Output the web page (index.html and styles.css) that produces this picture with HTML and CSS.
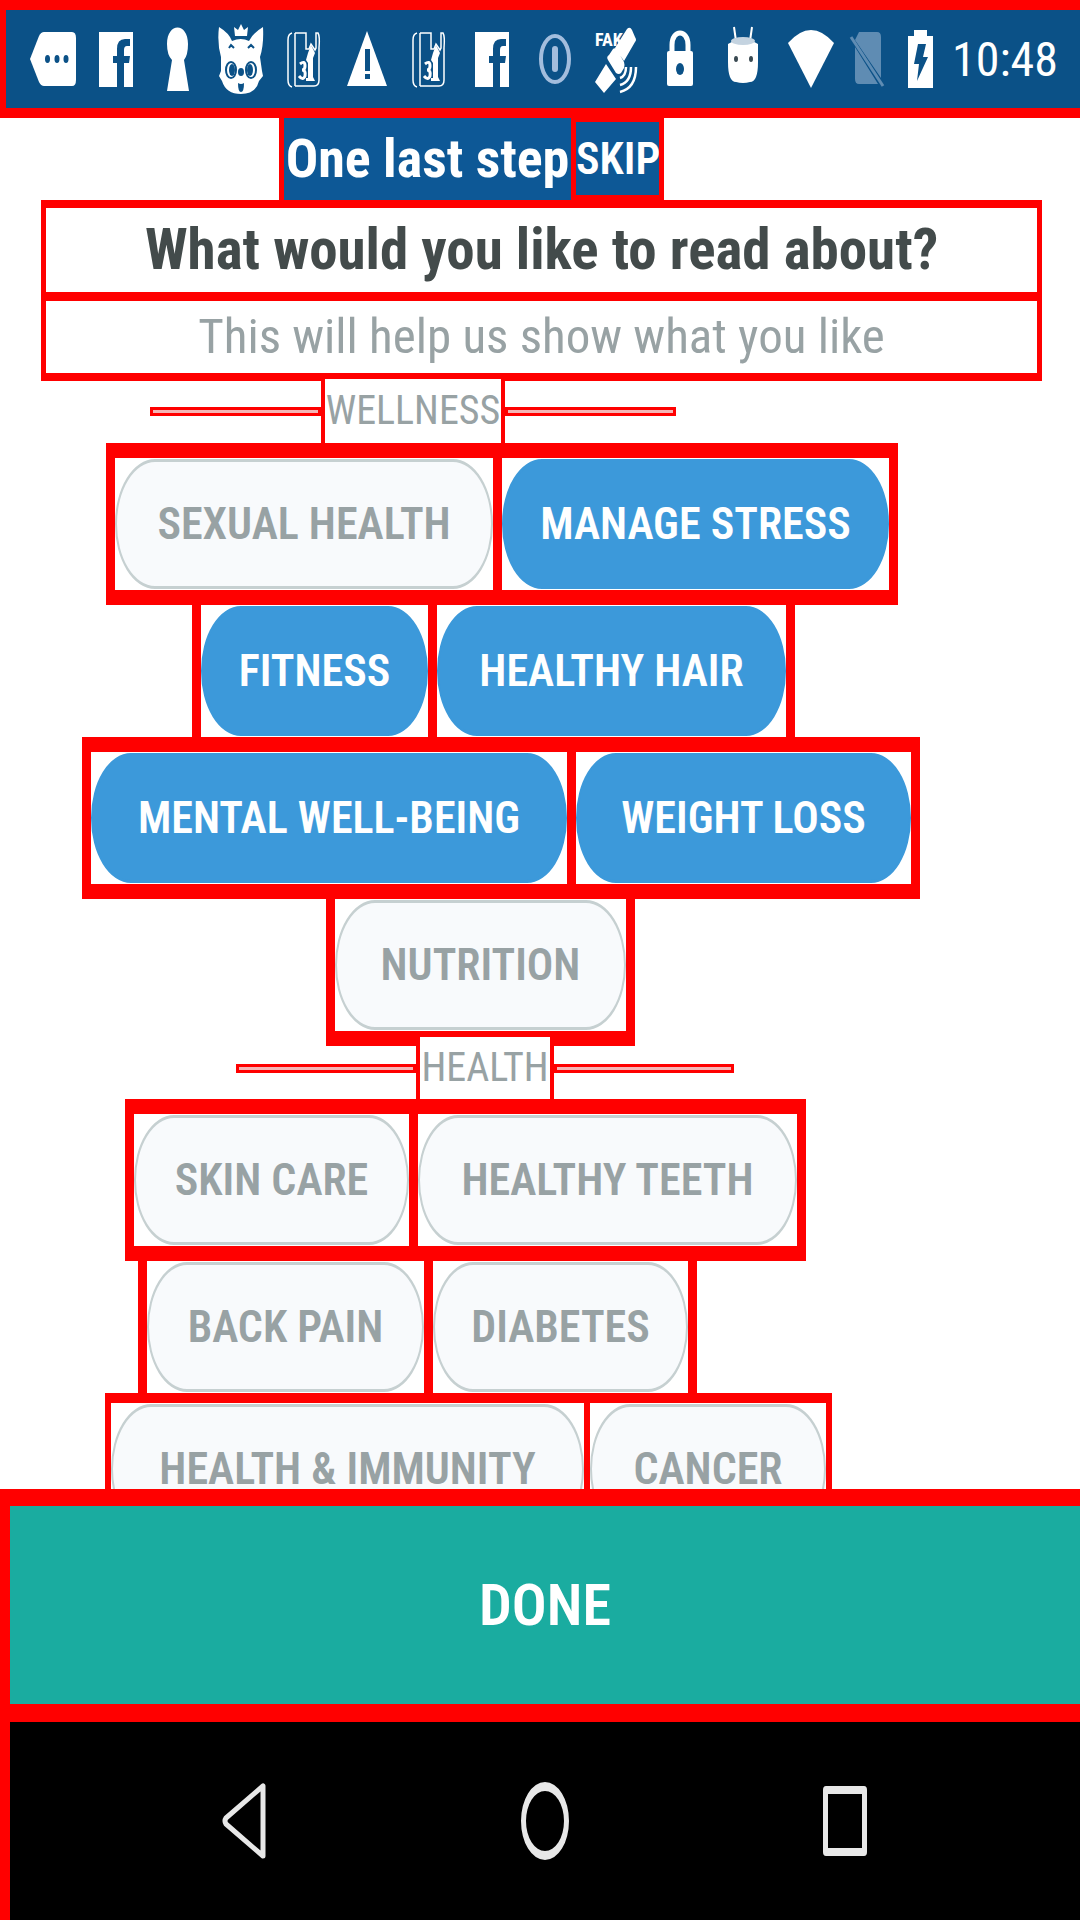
FILE: index.html
```html
<!DOCTYPE html>
<html lang="en">
<head>
<meta charset="utf-8">
<meta name="viewport" content="width=device-width, initial-scale=1">
<title>One last step</title>
<link rel="stylesheet" href="styles.css">
</head>
<body>
<svg class="defs" aria-hidden="true">
  <symbol id="facebook" viewBox="0 0 62 98">
    <path fill="currentColor" d="M14 22H48V77H39V53H44L45 46H39V40Q39 36 42 36H45V29H40Q32 29 32 39V46H28V53H32V77H14Z"/>
  </symbol>
  <symbol id="card" viewBox="0 0 62 98">
    <path fill="none" stroke="currentColor" stroke-width="1.5" d="M19 23Q15 24 15 30V70Q15 76 19 77M22 23V76M22 23H33V39H36L38 34L42 40L43 38V23H45Q47 26 46 38V70Q46 76 41 76H22"/>
    <path fill="currentColor" d="M35 43L38 35L42 43L40 48V67L42 71H33V68H35V53L33 50Z"/>
    <path fill="none" stroke="currentColor" stroke-width="3" d="M27 54Q32 50 32 56Q32 60 29 60Q33 60 32 66Q30 71 26 66"/>
  </symbol>
</svg>

<header class="status">
  <div class="notices">
    <svg class="icon" viewBox="0 0 62 98"><path fill="currentColor" d="M8 49L17 26Q19 22 22 22H50Q54 22 54 28V70Q54 76 50 76H22Q19 76 17 72Z"/><g fill="#0b5187"><ellipse cx="25.500" cy="49" rx="2.500" ry="4"/><ellipse cx="35" cy="49" rx="2.500" ry="4"/><ellipse cx="44" cy="49" rx="2.500" ry="4"/></g></svg>
    <svg class="icon"><use href="#facebook"/></svg>
    <svg class="icon" viewBox="0 0 62 98"><path fill="currentColor" d="M25 50Q20 45 20 34C20 12 41 12 41 34Q41 45 37 50L42 81H20Z"/></svg>
    <svg class="icon" viewBox="0 0 62 98"><path fill="currentColor" d="M24 17L28 20L31 14L34 20L38 17L37 26H25ZM9 17Q19 23 22 31Q31 27 39 31Q43 23 53 17Q54 35 50 47L52 61L53 66L49 71Q46 84 31 84Q16 84 12 71L9 66L11 61L11 47Q7 33 9 17Z"/><g fill="none" stroke="#0b5187"><path stroke-width="2" d="M19 38L21 35L24 38M38 38L41 35L44 38"/><ellipse cx="21" cy="60" rx="5" ry="8" stroke-width="2"/><ellipse cx="41" cy="60" rx="5" ry="8" stroke-width="2"/></g><g fill="#0b5187"><ellipse cx="22" cy="60" rx="3" ry="6"/><ellipse cx="40" cy="60" rx="3" ry="6"/><ellipse cx="31" cy="62" rx="3" ry="4"/><path d="M28 73Q31 75 34 73Q34 82 31 82Q28 82 28 73Z"/></g></svg>
    <svg class="icon"><use href="#card"/></svg>
    <svg class="icon" viewBox="0 0 62 98"><path fill="currentColor" d="M31 21L51 76H11Z"/><path fill="#0b5187" d="M29 39H34V61H29ZM29 64H34V69H29Z"/></svg>
    <svg class="icon"><use href="#card"/></svg>
    <svg class="icon"><use href="#facebook"/></svg>
    <svg class="icon icon-dim" viewBox="0 0 62 98"><ellipse cx="31" cy="49" rx="14" ry="23" fill="none" stroke="currentColor" stroke-width="4"/><path stroke="currentColor" stroke-width="6" stroke-linecap="round" d="M31 39V59"/></svg>
    <svg class="icon" viewBox="0 0 62 98"><text class="fake" x="9" y="36">FAK</text><g fill="currentColor"><path d="M41 19Q44 16 46 20L49 27Q51 30 49 32L38 51L29 38ZM20 54L30 69L18 83L9 72ZM22 50Q20 47 23 45L27 39Q29 37 31 40L38 52Q39 55 38 58L35 63Q33 65 30 63Z"/></g><path fill="none" stroke="currentColor" stroke-width="2.500" d="M34 68Q40 66 40 57M34 75Q45 72 45 57M34 82Q50 78 50 57"/></svg>
    <svg class="icon" viewBox="0 0 62 98"><path fill="none" stroke="currentColor" stroke-width="5" d="M23 42V35C23 19 39 19 39 35V42"/><rect x="18" y="41" width="26" height="35" rx="2" fill="currentColor"/><ellipse cx="31" cy="59" rx="4" ry="6" fill="#0b5187"/></svg>
    <svg class="icon" viewBox="0 0 62 98"><path stroke="currentColor" stroke-width="2" d="M22 17L24 31M40 17L38 31"/><path fill="currentColor" d="M16 34Q31 25 46 34V52Q46 72 38 72Q31 74 24 72Q16 72 16 52Z"/><ellipse cx="31" cy="31" rx="12" ry="4" fill="#c4d3e0"/><g fill="#3a4a52"><ellipse cx="24" cy="49" rx="2" ry="3"/><ellipse cx="39" cy="49" rx="2" ry="3"/></g></svg>
  </div>
  <div class="system">
    <svg class="icon" viewBox="0 0 62 98"><path fill="currentColor" d="M8 33Q31 7 54 33L31 78Z"/></svg>
    <svg class="icon icon-faint" viewBox="0 0 62 98"><path fill="currentColor" d="M24 22H42Q46 22 46 27V68L20 30ZM20 37L43 74H24Q20 74 20 69Z"/><path stroke="currentColor" stroke-width="3" d="M16 27L48 76"/></svg>
    <svg class="icon" viewBox="0 0 62 98"><path fill="currentColor" d="M18 26H24V20H37V26H43V78H18Z"/><path fill="#0b5187" d="M28 34H36L33 47H38L27 71L29 54H24Z"/></svg>
  </div>
  <time class="clock">10:48</time>
</header>

<main class="content">
  <div class="titlebar">
    <h1 class="title">One last step</h1>
    <button class="skip" type="button">SKIP</button>
  </div>
  <div class="intro">
    <h2 class="question">What would you like to read about?</h2>
    <p class="hint">This will help us show what you like</p>
  </div>

  <section class="group">
    <div class="divider divider-wellness"><span class="rule"></span><h3 class="label">WELLNESS</h3><span class="rule"></span></div>
    <div class="row row-framed row-a">
      <div class="cell"><button class="pill" type="button" aria-pressed="false">SEXUAL HEALTH</button></div>
      <div class="cell"><button class="pill" type="button" aria-pressed="true">MANAGE STRESS</button></div>
    </div>
    <div class="row row-b">
      <div class="cell"><button class="pill" type="button" aria-pressed="true">FITNESS</button></div>
      <div class="cell"><button class="pill" type="button" aria-pressed="true">HEALTHY HAIR</button></div>
    </div>
    <div class="row row-framed row-c">
      <div class="cell"><button class="pill" type="button" aria-pressed="true">MENTAL WELL-BEING</button></div>
      <div class="cell"><button class="pill" type="button" aria-pressed="true">WEIGHT LOSS</button></div>
    </div>
    <div class="row row-last row-d">
      <div class="cell"><button class="pill" type="button" aria-pressed="false">NUTRITION</button></div>
    </div>
  </section>

  <section class="group">
    <div class="divider divider-health"><span class="rule"></span><h3 class="label">HEALTH</h3><span class="rule"></span></div>
    <div class="row row-framed row-e">
      <div class="cell"><button class="pill" type="button" aria-pressed="false">SKIN CARE</button></div>
      <div class="cell"><button class="pill" type="button" aria-pressed="false">HEALTHY TEETH</button></div>
    </div>
    <div class="row row-f">
      <div class="cell"><button class="pill" type="button" aria-pressed="false">BACK PAIN</button></div>
      <div class="cell"><button class="pill" type="button" aria-pressed="false">DIABETES</button></div>
    </div>
    <div class="row row-thin row-g">
      <div class="cell"><button class="pill" type="button" aria-pressed="false">HEALTH &amp; IMMUNITY</button></div>
      <div class="cell"><button class="pill" type="button" aria-pressed="false">CANCER</button></div>
    </div>
  </section>
</main>

<footer class="footer">
  <button class="done" type="button">DONE</button>
  <nav class="nav" aria-label="System">
    <button class="key" type="button" aria-label="Back"><svg width="50" height="80" viewBox="0 0 50 80"><path fill="none" stroke="currentColor" stroke-width="5" stroke-linejoin="round" d="M43 5V75L6 43Q4 40 6 37Z"/></svg></button>
    <button class="key" type="button" aria-label="Home"><svg width="50" height="80" viewBox="0 0 50 80"><path fill="currentColor" fill-rule="evenodd" d="M25 1A24 39 0 0 1 25 79A24 39 0 0 1 25 1ZM25 10A19 30 0 0 0 25 70A19 30 0 0 0 25 10Z"/></svg></button>
    <button class="key" type="button" aria-label="Recent apps"><svg width="50" height="80" viewBox="0 0 50 80"><path fill="currentColor" fill-rule="evenodd" d="M6 5H44Q47 5 47 9V71Q47 75 44 75H6Q3 75 3 71V9Q3 5 6 5ZM8 13V67H42V13Z"/></svg></button>
  </nav>
</footer>
</body>
</html>
```
FILE: styles.css
```css
* {
  box-sizing: border-box;
}

body {
  --frame: #ff0000;
  margin: 0;
  height: 100vh;
  display: flex;
  flex-direction: column;
  background: #ffffff;
  font-family: "Roboto Condensed", Roboto, sans-serif;
}

h1, h2, h3, p {
  margin: 0;
}

button {
  margin: 0;
  padding: 0;
  border: 0;
  font-family: inherit;
  cursor: pointer;
}

.defs {
  position: absolute;
  width: 0;
  height: 0;
}

/* Status bar */

.status {
  flex: none;
  display: flex;
  align-items: center;
  padding: 0 24px 0 16px;
  border: solid var(--frame);
  border-width: 10px 0 10px 6px;
  background: #0b5187;
  color: #ffffff;
}

.notices {
  flex: 1;
  display: flex;
  justify-content: space-between;
}

.icon {
  display: block;
  width: 62px;
  height: 98px;
}

.icon-dim {
  color: #a3bddd;
}

.icon-faint {
  color: #5f8cb3;
}

.fake {
  fill: currentColor;
  font-size: 18px;
  font-weight: 700;
}

.system {
  display: flex;
  padding-left: 6px;
}

.system .icon + .icon {
  margin-left: -7px;
}

.clock {
  width: 104px;
  font-size: 48px;
  text-align: center;
}

/* Page content */

.content {
  flex: 1;
  min-height: 0;
  overflow: hidden;
}

.titlebar {
  display: flex;
  width: fit-content;
  margin-left: 279px;
  padding: 0 5px;
  gap: 5px;
  background: var(--frame);
  color: #ffffff;
}

.title {
  width: 287px;
  background: #0d5896;
  font-size: 54px;
  font-weight: 700;
  line-height: 82px;
  text-align: center;
  white-space: nowrap;
}

.skip {
  width: 83px;
  margin: 4px 0 5px;
  background: #0d5896;
  color: inherit;
  font-size: 44px;
  font-weight: 600;
}

.intro {
  display: grid;
  gap: 9px;
  margin: 0 38px 0 41px;
  padding: 8px 5px;
  background: var(--frame);
  text-align: center;
}

.question {
  background: #ffffff;
  color: #434b4b;
  font-size: 57px;
  font-weight: 700;
  line-height: 84px;
}

.hint {
  background: #ffffff;
  color: #98a2a4;
  font-size: 49px;
  line-height: 72px;
}

.divider {
  position: relative;
  display: flex;
  align-items: center;
  width: fit-content;
}

.divider-wellness {
  margin: -2px 0 0 150px;
}

.divider-health {
  margin: -9px 0 0 236px;
}

.rule {
  width: 171px;
  height: 9px;
  border: 3px solid var(--frame);
  background: #f5b5b5;
}

.divider-health .rule {
  width: 180px;
}

.label {
  border: solid var(--frame);
  border-width: 0 4px;
  background: #ffffff;
  color: #98a2a4;
  font-size: 40px;
  font-weight: 400;
  line-height: 64px;
  text-align: center;
}

.divider-wellness .label {
  width: 184px;
}

.divider-health .label {
  width: 138px;
  line-height: 62px;
}

/* Topic rows */

.row {
  display: grid;
  gap: 9px;
  width: fit-content;
  padding: 0 9px;
  background: var(--frame);
}

.row-framed {
  padding: 15px 9px;
}

.row-last {
  padding: 0 9px 15px;
}

.row-thin {
  gap: 6px;
  padding: 10px 6px;
}

.row-a {
  margin-left: 106px;
  grid-template-columns: 378px 387px;
}

.row-b {
  margin-left: 192px;
  grid-template-columns: 227px 349px;
}

.row-c {
  margin-left: 82px;
  grid-template-columns: 476px 335px;
}

.row-d {
  margin-left: 326px;
  grid-template-columns: 291px;
}

.row-e {
  margin-left: 125px;
  grid-template-columns: 275px 379px;
}

.row-f {
  margin-left: 138px;
  grid-template-columns: 277px 255px;
}

.row-g {
  margin-left: 105px;
  grid-template-columns: 473px 236px;
}

.cell {
  display: grid;
  padding: 1px 0;
  background: #ffffff;
}

.pill {
  height: 130px;
  border: solid #c6d0d1;
  border-width: 3px 2px;
  border-radius: 40px / 65px;
  background: #f8fafc;
  color: #98a2a4;
  font-size: 44px;
  font-weight: 600;
  white-space: nowrap;
}

.pill[aria-pressed="true"] {
  border-color: #3c99da;
  background: #3c99da;
  color: #ffffff;
}

/* Bottom action and navigation keys */

.footer {
  flex: none;
  border: solid var(--frame);
  border-width: 17px 0 0 10px;
}

.done {
  display: block;
  width: 100%;
  height: 198px;
  background: #1aaca0;
  color: #ffffff;
  font-size: 58px;
  font-weight: 600;
}

.nav {
  display: flex;
  justify-content: space-between;
  align-items: center;
  padding: 0 210px;
  border-top: 18px solid var(--frame);
  background: #000000;
  height: 216px;
}

.key {
  background: transparent;
  color: #e8e8e8;
}

.key svg {
  display: block;
}
```
